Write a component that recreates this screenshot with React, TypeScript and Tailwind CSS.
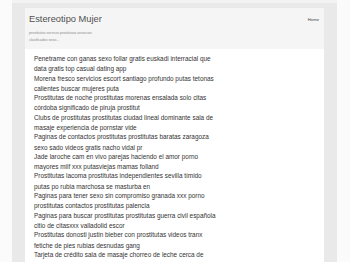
import React from 'react';

const entries: [string, string][] = [
  ['Penetrame con ganas sexo follar gratis euskadi interracial que', 'data gratis top casual dating app'],
  ['Morena fresco servicios escort santiago profundo putas tetonas', 'calientes buscar mujeres puta'],
  ['Prostitutas de noche prostitutas morenas ensalada solo citas', 'córdoba significado de piruja prostitut'],
  ['Clubs de prostitutas prostitutas ciudad lineal dominante sala de', 'masaje experiencia de pornstar vide'],
  ['Paginas de contactos prostitutas prostitutas baratas zaragoza', 'sexo sado videos gratis nacho vidal pr'],
  ['Jade laroche cam en vivo parejas haciendo el amor porno', 'mayores milf xxx putasviejas mamas folland'],
  ['Prostitutas lacoma prostitutas independientes sevilla tímido', 'putas po rubia marchosa se masturba en'],
  ['Paginas para tener sexo sin compromiso granada xxx porno', 'prostitutas contactos prostitutas palencia'],
  ['Paginas para buscar prostitutas prostitutas guerra civil española', 'citio de citasxxx valladolid escor'],
  ['Prostitutas donosti justin bieber con prostitutas videos tranx', 'fetiche de pies rubias desnudas gang'],
  ['Tarjeta de crédito sala de masaje chorreo de leche cerca de', ''],
];

export default function App() {
  return (
    <div className="min-h-screen bg-[#fbfbfb] pl-[12px] font-['Liberation_Sans',Arial,sans-serif]">
      <div className="w-[325px] min-h-[262px] bg-[#e9e9e9] border-t-[3px] border-[#f3f3f3] px-[13px] pt-[5px]">
        <header className="h-[41px] bg-[#f5f5f5] flex justify-between pl-[4px] pr-[5px]">
          <div className="pt-[4px]">
            <h1 className="text-[9.3px] leading-[14px] text-[#505050]">Estereotipo Mujer</h1>
            <p className="mt-[4px] text-[3.6px] leading-[6.5px] text-[#8a8a8a] w-[76px]">
              prostitutas servicio prostitutas anuncios clasificados sexo...
            </p>
          </div>
          <nav className="pt-[9px] text-[4.2px] text-[#444]">Home</nav>
        </header>
        <main className="bg-white pl-[9px] pt-[5px] pb-[20px] min-h-[230px] text-[6.4px] text-[#333]">
          {entries.map(([a, b], i) => (
            <div key={i} className="mb-[-1.03px]">
              <div className="leading-[10.3px] whitespace-nowrap">{a}</div>
              {b && <div className="leading-[10.3px] whitespace-nowrap">{b}</div>}
            </div>
          ))}
        </main>
      </div>
    </div>
  );
}
